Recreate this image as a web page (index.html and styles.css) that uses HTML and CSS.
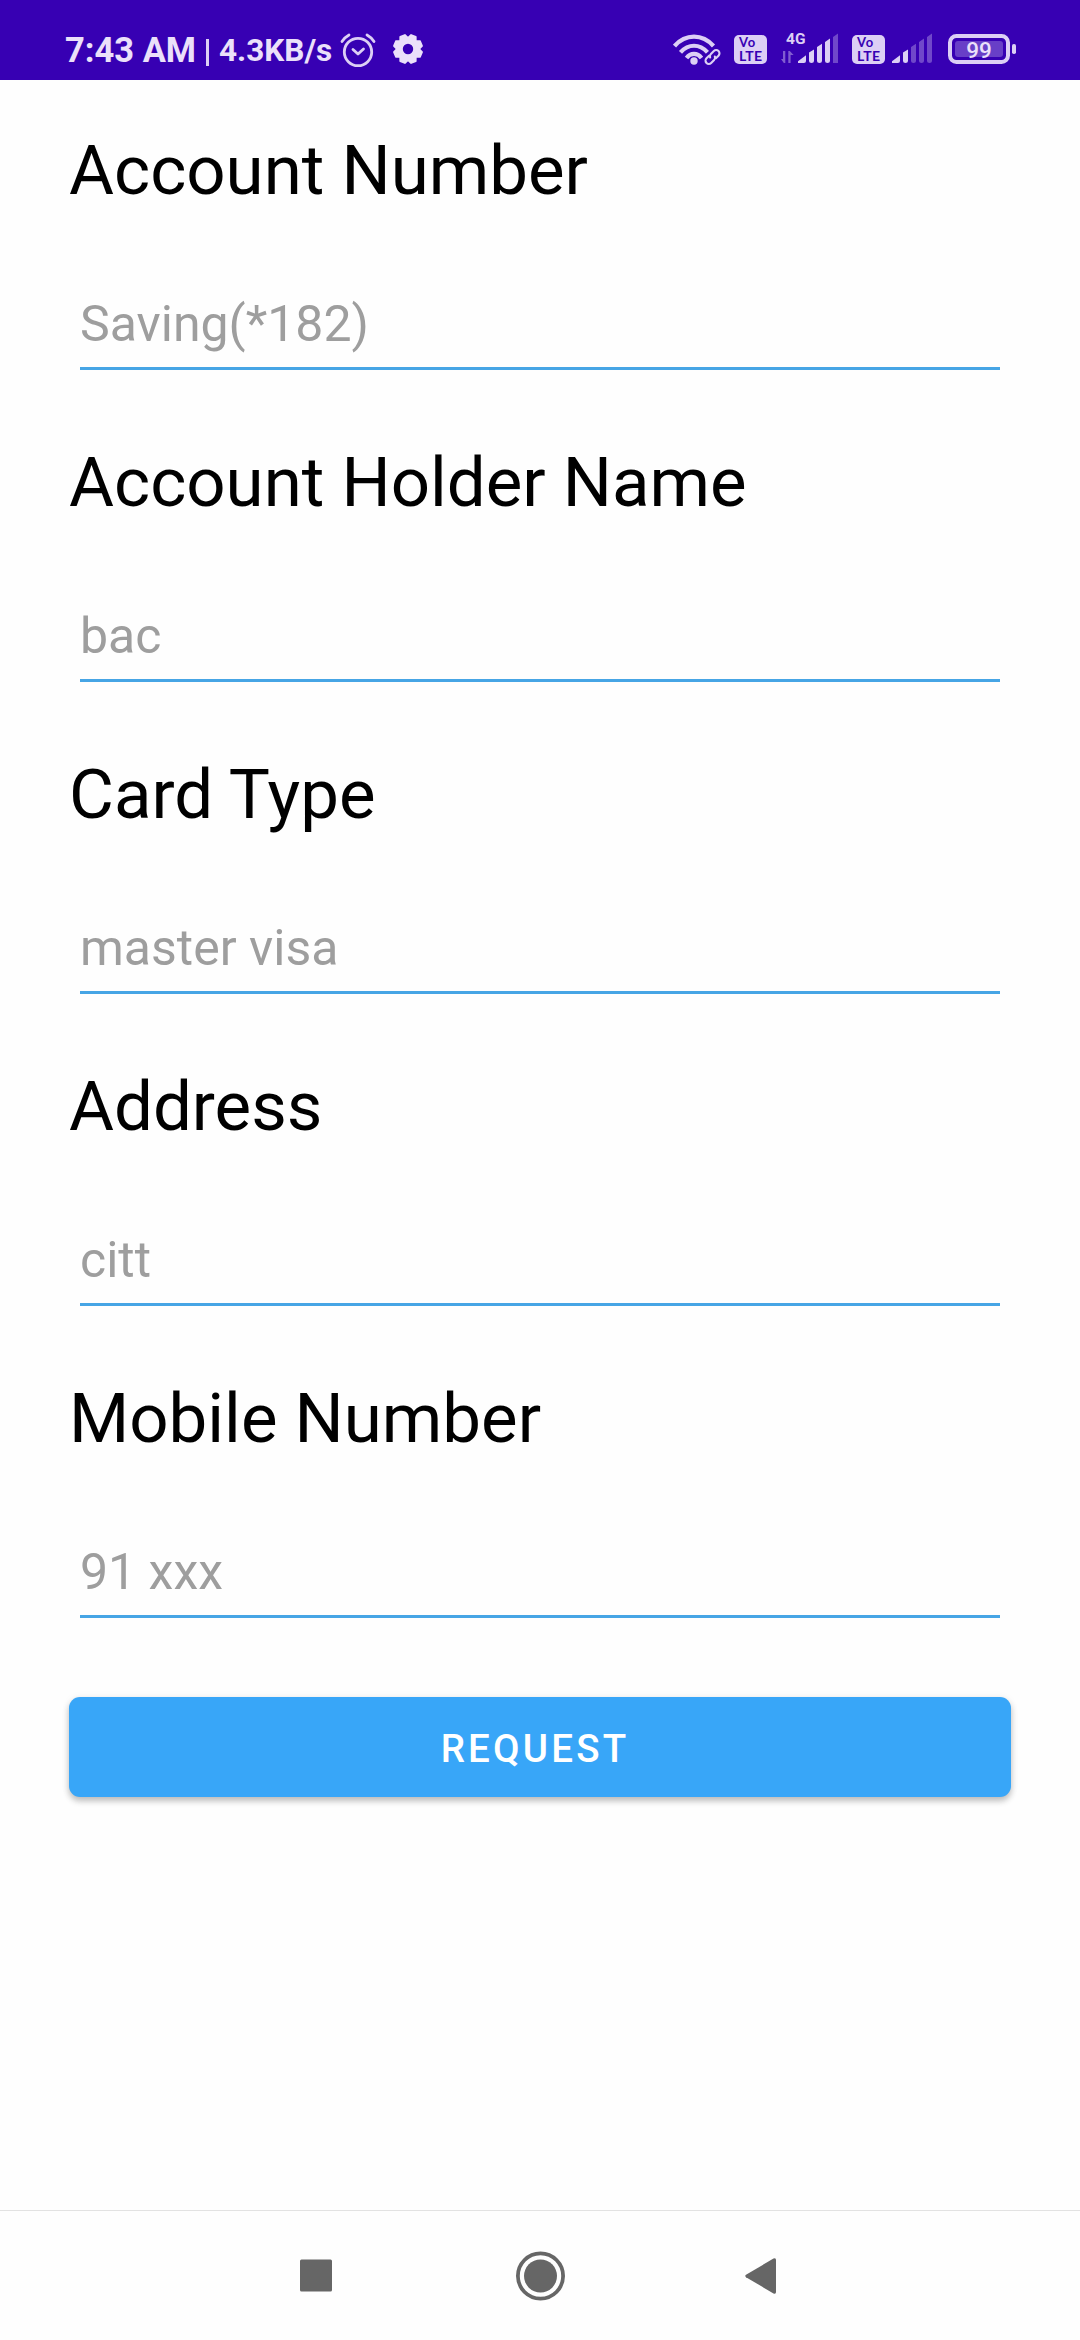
FILE: index.html
```html
<!DOCTYPE html>
<html lang="en">
<head>
<meta charset="utf-8">
<title>Card Request</title>
<link rel="stylesheet" href="styles.css">
</head>
<body>
<div class="screen">
  <header class="status">
    <span class="clock">7:43 AM</span>
    <span class="divider"></span>
    <span class="speed">4.3KB/s</span>
    <svg class="alarm" width="36" height="36" viewBox="340 32 36 36" fill="none" stroke="currentColor" stroke-width="2.8" stroke-linecap="round" stroke-linejoin="round">
      <circle cx="358" cy="52" r="13.7"/>
      <path d="M342 41.5Q344.500 37.500 349 35M374 41.500Q371.500 37.500 367 35M353 49.500l5 4.500 5.500-5"/>
    </svg>
    <svg class="gear" width="30" height="30" viewBox="-15 -15 30 30">
      <path fill="none" stroke="currentColor" stroke-width="7" d="M8.700 0A8.700 8.700 0 1 1-8.700 0A8.700 8.700 0 1 1 8.700 0"/>
      <g fill="currentColor">
        <path id="tooth" transform="rotate(22.500)" d="M-4.800-11L-3.300-14.600Q-3-15-2.500-15H2.500Q3-15 3.300-14.600L4.800-11Z"/>
        <use href="#tooth" transform="rotate(45)"/><use href="#tooth" transform="rotate(90)"/>
        <use href="#tooth" transform="rotate(135)"/><use href="#tooth" transform="rotate(180)"/>
        <use href="#tooth" transform="rotate(225)"/><use href="#tooth" transform="rotate(270)"/>
        <use href="#tooth" transform="rotate(315)"/>
      </g>
    </svg>
    <svg class="wifi" width="48" height="34" viewBox="673 33 48 34" fill="none" stroke="currentColor">
      <path stroke-width="4.200" d="M674.500 46C685.500 33.500 702.500 33.500 713.500 46M680.500 52.300C688.500 43.600 699.500 43.600 707.500 52.300M686.500 58C690.500 52.600 697.500 52.600 701.500 58"/>
      <circle cx="694" cy="61" r="3.700" fill="currentColor" stroke="none"/>
      <g transform="rotate(-45 712.500 57)">
        <rect x="701.500" y="50.500" width="22" height="13" rx="6.500" fill="#3700b3" stroke="none"/>
        <path stroke-width="2.100" stroke-linecap="round" d="M711 53.700h-3.700a3.300 3.300 0 0 0 0 6.600h4.200a3.300 3.300 0 0 0 3-2M714 60.300h3.700a3.300 3.300 0 0 0 0-6.600h-4.200a3.300 3.300 0 0 0-3 2"/>
      </g>
    </svg>
    <span class="volte volte-one"><span class="vo">Vo</span><span class="lte">LTE</span></span>
    <svg class="network" width="58" height="34" viewBox="781 31 58 34" fill="currentColor">
      <text class="net-label" x="786" y="44.300" textLength="19.500" lengthAdjust="spacingAndGlyphs">4G</text>
      <path opacity=".45" d="M785.300 51v12h-1.500l-2.800-4h2V51zM788.300 63V51h1.500l3.800 4h-3v8z"/>
      <path d="M798 63v-1.700l8-6V61q0 2-2 2zM809 52.500l5-3V61q0 2-2.500 2T809 61zM817 47l5-3.300V61q0 2-2.500 2T817 61zM825 42l5-3.500V61q0 2-2.500 2T825 61z"/>
      <path opacity=".35" d="M833 37l5-3.500V63h-5z"/>
    </svg>
    <span class="volte volte-two"><span class="vo">Vo</span><span class="lte">LTE</span></span>
    <svg class="signal" width="41" height="34" viewBox="892 31 41 34" fill="currentColor">
      <path d="M892 63v-1.700l8-6V61q0 2-2 2zM903 52.500l5-3V61q0 2-2.500 2T903 61z"/>
      <path opacity=".35" d="M911 47l5-3.300V61q0 2-2.500 2T911 61zM919 42l5-3.500V61q0 2-2.500 2T919 61zM927 37l5-3.500V61q0 2-2.500 2T927 61z"/>
    </svg>
    <svg class="battery" width="68" height="30" viewBox="948 34 68 30" fill="currentColor">
      <rect x="950" y="36" width="58" height="26" rx="6.500" fill="none" stroke="currentColor" stroke-width="4"/>
      <rect x="955" y="41" width="48" height="16" rx="3" opacity=".3"/>
      <rect x="1012" y="44" width="4" height="10" rx="1.800"/>
      <text class="charge" x="979" y="57.500" text-anchor="middle">99</text>
    </svg>
  </header>

  <main class="form">
    <section class="field"><h2 class="label">Account Number</h2><div class="input">Saving(*182)</div></section>
    <section class="field"><h2 class="label">Account Holder Name</h2><div class="input">bac</div></section>
    <section class="field"><h2 class="label">Card Type</h2><div class="input">master visa</div></section>
    <section class="field"><h2 class="label">Address</h2><div class="input">citt</div></section>
    <section class="field"><h2 class="label">Mobile Number</h2><div class="input">91 xxx</div></section>
    <button class="request" type="button">REQUEST</button>
  </main>

  <nav class="nav">
    <svg width="50" height="50" viewBox="-25 -25 50 50"><rect x="-16" y="-16.500" width="32" height="32" rx="1.500" fill="currentColor"/></svg>
    <svg width="50" height="50" viewBox="-25.500 -25 50 50"><circle r="22.600" fill="none" stroke="currentColor" stroke-width="3.800"/><circle r="16.500" fill="currentColor"/></svg>
    <svg width="50" height="50" viewBox="-21.500 -25 50 50"><path d="M-14.500-1.200L13-17.500Q15.500-18.500 15.500-16V16Q15.500 18.500 13 17.500L-14.500 1.200Q-16 0-14.500-1.200Z" fill="currentColor"/></svg>
  </nav>
</div>
</body>
</html>
```
FILE: styles.css
```css
* { box-sizing: border-box; }

body {
  margin: 0;
  background: #fefefe;
  font-family: Roboto, "Liberation Sans", sans-serif;
}

.screen {
  display: flex;
  flex-direction: column;
  width: 1080px;
  height: 2340px;
}

/* Status bar */
.status {
  display: flex;
  align-items: flex-start;
  height: 80px;
  padding-left: 65px;
  background: #3700b3;
  color: #dccff5;
  white-space: nowrap;
}

.status svg { flex: none; display: block; }

.clock {
  width: 141px;
  margin-top: 30px;
  font-size: 34.500px;
  line-height: 40px;
  font-weight: 700;
  color: #ebe0fa;
}

.divider {
  width: 3px;
  height: 27px;
  margin-top: 39px;
  background: #dccff5;
}

.speed {
  width: 120px;
  margin-top: 31px;
  padding-left: 10px;
  font-size: 31.500px;
  line-height: 40px;
  font-weight: 700;
  color: #ebe0fa;
}

.alarm { margin: 32px 0 0 11px; }
.gear { margin: 34px 0 0 17px; color: #ebe0fa; }
.wifi { margin: 33px 0 0 250px; }

.volte {
  display: flex;
  flex-direction: column;
  align-items: flex-start;
  flex: none;
  width: 33px;
  height: 29px;
  margin-top: 35px;
  padding: 1px 0 0 5px;
  border-radius: 5px;
  background: #dccff5;
  color: #3700b3;
  font: 700 14px/13px Lato, sans-serif;
}

.vo { font-size: 13px; letter-spacing: 0.800px; }
.lte { letter-spacing: 0.300px; }
.volte-one { margin-left: 13px; }
.volte-two { margin-left: 13px; }
.network { margin: 31px 0 0 14px; }
.signal { margin: 31px 0 0 7px; }
.battery { margin: 34px 0 0 15px; }
.net-label { font: 700 15.500px Roboto, sans-serif; }
.charge { font: 500 22.500px Roboto, sans-serif; fill: #ebe0fa; }

/* Form */
.form {
  flex: 1;
  padding: 51px 69px 0;
}

.field { height: 312px; }

.label {
  margin: 0;
  font-size: 69px;
  line-height: 80px;
  font-weight: 400;
  color: #000;
}

.input {
  height: 109px;
  margin: 50px 11px 0;
  padding-top: 34px;
  border-bottom: 3px solid #46a5e5;
  font-size: 50px;
  line-height: 58px;
  color: #9e9e9e;
}

.request {
  display: block;
  width: 942px;
  height: 100px;
  margin-top: 6px;
  padding: 3px 10px 0 0;
  border: 0;
  border-radius: 11px;
  background: #38a6f8;
  box-shadow: 0 4px 6px rgba(0, 0, 0, 0.24), 0 1px 10px rgba(0, 0, 0, 0.06);
  color: #fff;
  font: 500 38.500px/44px Roboto, sans-serif;
  letter-spacing: 3.200px;
}

/* System navigation */
.nav {
  display: flex;
  align-items: flex-start;
  gap: 174px;
  height: 130px;
  padding: 40px 0 0 291px;
  border-top: 1px solid #e2e2e2;
  color: #666;
}
```
